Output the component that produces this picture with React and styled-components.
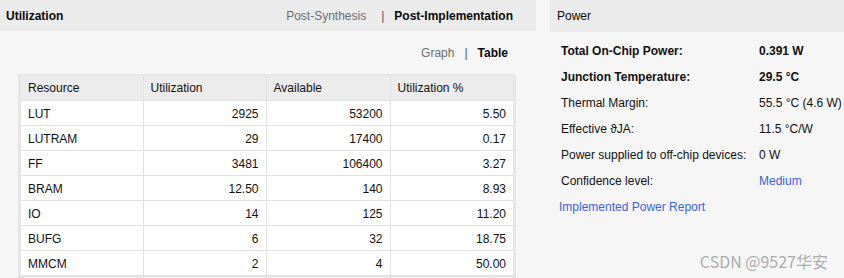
import React from "react";
import styled, { createGlobalStyle } from "styled-components";

const Global = createGlobalStyle`
  html, body { margin: 0; padding: 0; background: #f6f6f6; }
  body { font-family: "Liberation Sans", Arial, sans-serif; font-size: 12px; color: #111; }
`;

const Page = styled.div`
  position: relative;
  display: flex;
  gap: 14px;
  width: 844px;
  height: 278px;
  overflow: hidden;
  background: #f6f6f6;
`;

const Panel = styled.section`
  display: flex;
  flex-direction: column;
  width: ${(p) => (p.$w ? `${p.$w}px` : "auto")};
  flex: ${(p) => (p.$w ? "none" : "1")};
`;

const Header = styled.div`
  height: 32px;
  display: flex;
  align-items: center;
  justify-content: space-between;
  padding: 0 23px 0 ${(p) => p.$pl || 6}px;
  background: #ebebeb;
  box-sizing: border-box;
`;

const Title = styled.div`
  font-weight: ${(p) => (p.$bold ? 700 : 400)};
  font-size: 12px;
  color: #0a0a0a;
`;

const Switch = styled.div`
  display: flex;
  align-items: center;
  font-size: 12px;
`;

const SwitchItem = styled.span`
  color: ${(p) => (p.$active ? "#0a0a0a" : "#6e6e6e")};
  font-weight: ${(p) => (p.$active ? 700 : 400)};
`;

const Sep = styled.span`
  color: #555;
  margin: 0 ${(p) => p.$mr || 10}px 0 ${(p) => p.$ml || 10}px;
`;

const ViewBar = styled.div`
  height: 38px;
  display: flex;
  align-items: center;
  justify-content: flex-end;
  padding: 6px 28px 0 0;
  box-sizing: border-box;
  margin-bottom: 5px;
`;

const TableFrame = styled.div`
  margin-left: 18px;
  width: 498px;
  box-sizing: border-box;
  padding: 2px 3px;
  background: #e6e6e6;
`;

const Table = styled.table`
  border-collapse: collapse;
  width: 492px;
  table-layout: fixed;
`;

const Th = styled.th`
  height: 25px;
  padding: 1px 7px 0;
  box-sizing: border-box;
  text-align: left;
  font-weight: 400;
  background: #ececec;
  border-left: 1px solid #e2e2e2;
  border-bottom: 1px solid #e2e2e2;
  color: #111;
  &:first-child { border-left: none; }
`;

const Td = styled.td`
  height: 25px;
  padding: 1px 7px 0 7px;
  box-sizing: border-box;
  background: #fff;
  text-align: ${(p) => (p.$num ? "right" : "left")};
  border-left: 1px solid #e2e2e2;
  border-bottom: 1px solid #e2e2e2;
  color: #111;
  &:first-child { border-left: none; }
`;

const PowerGrid = styled.div`
  display: grid;
  grid-template-columns: 198px auto;
  grid-auto-rows: 26px;
  align-items: center;
  padding: 6px 0 0 11px;
`;

const Label = styled.div`
  font-weight: ${(p) => (p.$bold ? 700 : 400)};
  color: #111;
`;

const Value = styled.div`
  font-weight: ${(p) => (p.$bold ? 700 : 400)};
  color: ${(p) => (p.$link ? "#3b63e0" : "#111")};
`;

const ReportLink = styled.div`
  grid-column: 1 / span 2;
  color: #3b63e0;
  margin-left: -2px;
`;

const Watermark = styled.div`
  position: absolute;
  right: 16px;
  bottom: 5px;
  font-family: "Noto Sans CJK SC", "Liberation Sans", sans-serif;
  font-size: 16px;
  color: rgba(150, 150, 150, 0.8);
`;

const rows = [
  ["LUT", "2925", "53200", "5.50"],
  ["LUTRAM", "29", "17400", "0.17"],
  ["FF", "3481", "106400", "3.27"],
  ["BRAM", "12.50", "140", "8.93"],
  ["IO", "14", "125", "11.20"],
  ["BUFG", "6", "32", "18.75"],
  ["MMCM", "2", "4", "50.00"],
];

const power = [
  ["Total On-Chip Power:", "0.391 W", true],
  ["Junction Temperature:", "29.5 °C", true],
  ["Thermal Margin:", "55.5 °C (4.6 W)"],
  ["Effective \u03D1JA:", "11.5 °C/W"],
  ["Power supplied to off-chip devices:", "0 W"],
  ["Confidence level:", "Medium", false, true],
];

export default function App() {
  return (
    <Page>
      <Global />
      <Panel $w={536}>
        <Header>
          <Title $bold>Utilization</Title>
          <Switch>
            <SwitchItem>Post-Synthesis</SwitchItem>
            <Sep $ml={15} $mr={10}>|</Sep>
            <SwitchItem $active>Post-Implementation</SwitchItem>
          </Switch>
        </Header>
        <ViewBar>
          <Switch>
            <SwitchItem>Graph</SwitchItem>
            <Sep>|</Sep>
            <SwitchItem $active>Table</SwitchItem>
          </Switch>
        </ViewBar>
        <TableFrame>
          <Table>
            <colgroup>
              <col style={{ width: 122 }} />
              <col style={{ width: 123 }} />
              <col style={{ width: 124 }} />
              <col style={{ width: 123 }} />
            </colgroup>
            <thead>
              <tr>
                <Th>Resource</Th>
                <Th>Utilization</Th>
                <Th>Available</Th>
                <Th>Utilization %</Th>
              </tr>
            </thead>
            <tbody>
              {rows.map((r) => (
                <tr key={r[0]}>
                  <Td>{r[0]}</Td>
                  <Td $num>{r[1]}</Td>
                  <Td $num>{r[2]}</Td>
                  <Td $num>{r[3]}</Td>
                </tr>
              ))}
            </tbody>
          </Table>
        </TableFrame>
      </Panel>
      <Panel>
        <Header $pl={7}>
          <Title>Power</Title>
        </Header>
        <PowerGrid>
          {power.map(([l, v, b, link]) => (
            <React.Fragment key={l}>
              <Label $bold={b}>{l}</Label>
              <Value $bold={b} $link={link}>{v}</Value>
            </React.Fragment>
          ))}
          <ReportLink>Implemented Power Report</ReportLink>
        </PowerGrid>
      </Panel>
      <Watermark>CSDN @9527华安</Watermark>
    </Page>
  );
}
